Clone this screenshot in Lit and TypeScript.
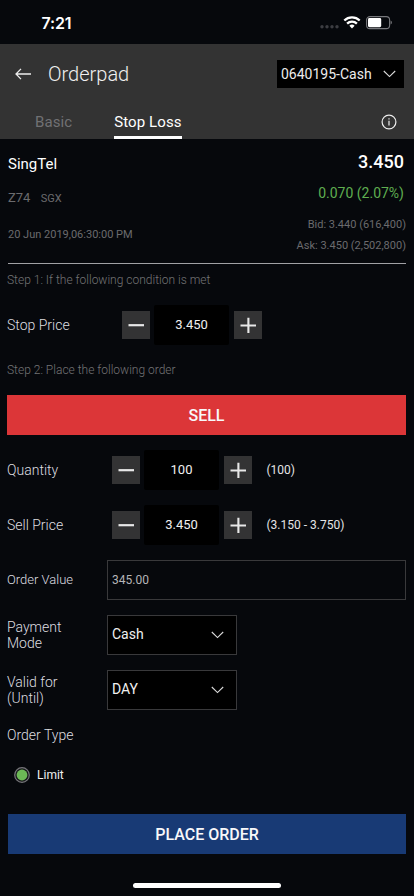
import { LitElement, html, css, svg } from "lit";
import { customElement, property, state } from "lit/decorators.js";

const chevron = html`<svg class="chevron" width="13" height="8" viewBox="0 0 13 8" fill="none" stroke="currentColor" stroke-width="1.1">
  <path d="M.8 1l5.7 5.6L12.2 1" />
</svg>`;

@customElement("status-bar")
class StatusBar extends LitElement {
  static styles = css`
    :host { display: flex; height: 44px; justify-content: space-between; padding: 0 22px 0 41.5px; box-sizing: border-box; color: #fff; }
    .time { font: 600 16px/20px Inter, sans-serif; letter-spacing: -0.2px; margin-top: 13px; }
    .icons { display: flex; align-items: center; height: 46px; }
    svg { display: block; }
  `;
  render() {
    return html`
      <span class="time">7:21</span>
      <span class="icons">
        <svg width="72" height="14" viewBox="0 0 72 14">
          ${[2, 7, 12, 17].map((x) => svg`<circle cx=${x} cy="10.8" r="1.7" fill="#3c3d42" />`)}
          <g fill="none" stroke="#fff" stroke-width="2.3">
            <path d="M24.3 4.5a11 11 0 0 1 15.4 0" />
            <path d="M27.1 7.6a6.9 6.9 0 0 1 9.8 0" />
          </g>
          <path d="M29.4 9.8a3.8 3.8 0 0 1 5.2 0L32 12.6z" fill="#fff" />
          <rect x="46.6" y="0.6" width="23" height="12" rx="3.4" fill="none" stroke="#77787c" stroke-width="1.1" />
          <rect x="48" y="2" width="13.2" height="9.2" rx="1.4" fill="#fff" />
          <path d="M70.6 4.6v4q1.3-.5 1.3-2t-1.3-2z" fill="#77787c" />
        </svg>
      </span>
    `;
  }
}

@customElement("price-stepper")
class PriceStepper extends LitElement {
  @property() value = "";
  static styles = css`
    :host { display: flex; align-items: center; gap: 4.5px; }
    button { width: 28px; height: 28px; border: 0; padding: 0; background: #333334; color: #e8e8e8; display: grid; place-items: center; }
    svg { display: block; }
    .value { width: 75px; height: 40px; background: #000; border-radius: 2px; color: #f0f0f0; text-align: center; font: 400 13px/40px Roboto, sans-serif; }
  `;
  render() {
    return html`
      <button aria-label="Decrease"><svg width="16" height="16" stroke="currentColor" stroke-width="2.2"><path d="M.5 8.2h15.5" /></svg></button>
      <span class="value">${this.value}</span>
      <button aria-label="Increase"><svg width="16" height="16" stroke="currentColor" stroke-width="2.1"><path d="M.5 8.5h15.5M8.4 .8v15.2" /></svg></button>
    `;
  }
}

@customElement("app-root")
class AppRoot extends LitElement {
  @state() tab = "Stop Loss";
  static styles = css`
    :host { display: flex; flex-direction: column; width: 414px; height: 896px; overflow: hidden; background: #06080c; color: #c9c9cb; font-family: Roboto, sans-serif; font-size: 14px; }
    svg { display: block; }
    header { height: 95px; background: #333; display: flex; flex-direction: column; }
    .bar { display: flex; align-items: center; height: 60px; padding: 0 10px 0 15px; }
    .title { font-weight: 300; font-size: 20px; color: #f0f0f0; margin-left: 17px; flex: 1; }
    .account { width: 127px; height: 28px; box-sizing: border-box; padding: 0 8px 0 4px; background: #000; color: #ececec; display: flex; justify-content: space-between; align-items: center; font-size: 14px; line-height: 26px; }
    .tabs { display: flex; height: 35px; padding: 0 17px 0 35px; box-sizing: border-box; }
    .tab { font-size: 15px; line-height: 36px; color: #717173; margin-right: 42px; letter-spacing: 0.1px; }
    .tab.on { color: #fff; box-shadow: inset 0 -3px #fff; margin-right: auto; height: 35px; }
    .info { align-self: center; color: #eee; }
    .quote { height: 125px; box-sizing: border-box; margin: 0 8px; border-bottom: 1px solid #a1a1a5; display: flex; justify-content: space-between; width: 398px; color: #6b6b6e; }
    .left, .right { display: flex; flex-direction: column; }
    .right { align-items: flex-end; }
    .name { color: #fff; font-size: 15px; line-height: 20px; margin-top: 15px; }
    .code { font-size: 13px; line-height: 20px; margin-top: 14px; }
    .code span { font-size: 11px; margin-left: 7px; }
    .date { font-size: 11px; line-height: 16px; margin-top: 18px; }
    .last { color: #fff; font-weight: 500; font-size: 18px; line-height: 24px; margin: 11px 2px 0 0; }
    .change { color: #5fae50; font-size: 14px; line-height: 20px; margin: 9px 2px 0 0; }
    .depth { font-size: 11px; line-height: 21px; margin-top: 11px; }
    .depth + .depth { margin-top: 0; }
    main { padding: 0 8px 0 7px; display: flex; flex-direction: column; }
    .step { height: 33px; line-height: 33px; font-size: 12px; font-weight: 300; color: #747476; }
    .stop + .step { height: 34px; line-height: 34px; }
    .row { height: 55px; display: flex; align-items: center; }
    .row.stop { height: 56px; }
    .row.short { height: 35px; }
    .label { width: 100px; font-weight: 300; font-size: 14px; line-height: 16px; color: #dedee0; }
    .label.narrow { font-size: 13px; }
    .stop .label { width: 114.5px; }
    price-stepper { margin-left: 4.5px; }
    .stop price-stepper { margin-left: 0; }
    .hint { margin-left: 15px; font-size: 12px; color: #e4e4e6; }
    .sell, .place { height: 40px; color: #f8f8fa; font-weight: 500; font-size: 16px; line-height: 41px; text-align: center; }
    .sell { background: #dc3638; margin: 8px 0 7.5px; }
    .place { background: #183a75; margin: 0 8px; }
    .box { height: 40px; box-sizing: border-box; border: 1px solid #39393b; padding: 0 12px 0 4px; display: flex; align-items: center; justify-content: space-between; }
    .total { flex: 1; font-size: 12px; color: #b5b5b8; }
    .select { width: 130px; background: #000; font-size: 14px; line-height: 36px; color: #f0f0f0; }
    .select > span { margin-bottom: 2px; }
    .chevron { color: #dcdcdc; }
    .radio { display: flex; align-items: center; gap: 7px; height: 45px; padding-left: 7px; color: #f0f0f0; font-size: 12px; margin-bottom: 16.5px; }
    .home { width: 148px; height: 5px; border-radius: 3px; background: #fff; margin: auto auto 8px; }
  `;
  render() {
    return html`
      <status-bar></status-bar>
      <header>
        <div class="bar">
          <svg width="16" height="12" fill="none" stroke="#eee" stroke-width="1.3"><path d="M6 .9L1 6l5 5.1M1 6h15" /></svg>
          <span class="title">Orderpad</span>
          <span class="account">0640195-Cash ${chevron}</span>
        </div>
        <nav class="tabs">
          ${["Basic", "Stop Loss"].map((t) => html`<span class="tab ${t === this.tab ? "on" : ""}">${t}</span>`)}
          <svg class="info" width="16" height="16" fill="none" stroke="currentColor" stroke-width="1.2">
            <circle cx="8" cy="8" r="6.9" /><path d="M8 6.8v4.6M8 4.3v1.3" />
          </svg>
        </nav>
      </header>
      <section class="quote">
        <div class="left">
          <div class="name">SingTel</div>
          <div class="code">Z74 <span>SGX</span></div>
          <div class="date">20 Jun 2019,06:30:00 PM</div>
        </div>
        <div class="right">
          <div class="last">3.450</div>
          <div class="change">0.070 (2.07%)</div>
          <div class="depth">Bid: 3.440 (616,400)</div>
          <div class="depth">Ask: 3.450 (2,502,800)</div>
        </div>
      </section>
      <main>
        <div class="step">Step 1: If the following condition is met</div>
        <div class="row stop"><span class="label">Stop Price</span><price-stepper value="3.450"></price-stepper></div>
        <div class="step">Step 2: Place the following order</div>
        <div class="sell">SELL</div>
        <div class="row"><span class="label">Quantity</span><price-stepper value="100"></price-stepper><span class="hint">(100)</span></div>
        <div class="row"><span class="label">Sell Price</span><price-stepper value="3.450"></price-stepper><span class="hint">(3.150 - 3.750)</span></div>
        <div class="row"><span class="label narrow">Order Value</span><span class="box total">345.00</span></div>
        <div class="row"><span class="label">Payment<br />Mode</span><span class="box select"><span>Cash</span>${chevron}</span></div>
        <div class="row"><span class="label">Valid for<br />(Until)</span><span class="box select"><span>DAY</span>${chevron}</span></div>
        <div class="row short"><span class="label">Order Type</span></div>
        <div class="radio">
          <svg width="16" height="16"><circle cx="8" cy="8" r="7.3" fill="#17181b" stroke="#77777b" stroke-width="1.2" /><circle cx="8" cy="8" r="5.4" fill="#6cb956" /></svg>
          Limit
        </div>
      </main>
      <div class="place">PLACE ORDER</div>
      <div class="home"></div>
    `;
  }
}
